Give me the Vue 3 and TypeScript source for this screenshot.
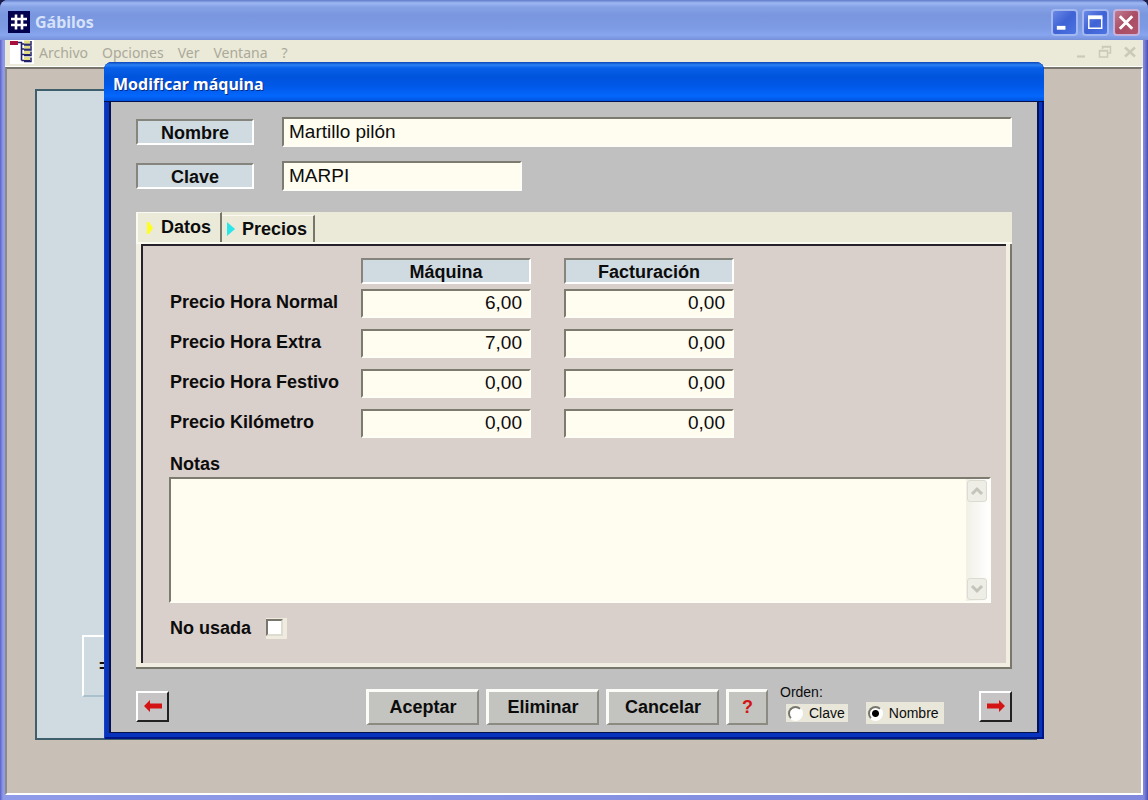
<script setup lang="ts">
import { ref } from 'vue'

interface PriceRow {
  id: string
  label: string
  machine: string
  billing: string
}

const menus: string[] = ['Archivo', 'Opciones', 'Ver', 'Ventana', '?']
const nombre = ref('Martillo pilón')
const clave = ref('MARPI')
const notas = ref('')
const noUsada = ref(false)
const orden = ref('nombre')
const activeTab = ref('datos')
const prices = ref<PriceRow[]>([
  { id: 'normal', label: 'Precio Hora Normal', machine: '6,00', billing: '0,00' },
  { id: 'extra', label: 'Precio Hora Extra', machine: '7,00', billing: '0,00' },
  { id: 'festivo', label: 'Precio Hora Festivo', machine: '0,00', billing: '0,00' },
  { id: 'km', label: 'Precio Kilómetro', machine: '0,00', billing: '0,00' },
])
</script>

<template>
  <div class="app-window">
    <header class="title-bar">
      <svg class="app-icon" width="22" height="22" viewBox="0 0 22 22" aria-hidden="true">
        <rect width="22" height="22" fill="#02024e" />
        <path d="M8 3.500V18.500M14 3.500V18.500M3 8H19M3 14H19" stroke="#fff" stroke-width="2.600" fill="none" />
      </svg>
      <h1>Gábilos</h1>
      <div class="caption-buttons">
        <button type="button" aria-label="Minimizar">
          <svg width="24" height="24" viewBox="0 0 24 24"><rect x="4" y="15" width="9" height="4" fill="#fff" /></svg>
        </button>
        <button type="button" aria-label="Maximizar">
          <svg width="24" height="24" viewBox="0 0 24 24">
            <path d="M5 6V17.500H18.500V6" fill="none" stroke="#fff" stroke-width="1.500" />
            <rect x="4.200" y="4" width="15" height="4" fill="#fff" />
          </svg>
        </button>
        <button type="button" class="close" aria-label="Cerrar">
          <svg width="24" height="24" viewBox="0 0 24 24"><path d="M5 5L18 18M18 5L5 18" stroke="#fff" stroke-width="3" /></svg>
        </button>
      </div>
    </header>

    <nav class="menu-bar">
      <svg class="tree-icon" width="24" height="24" viewBox="0 0 24 24" aria-hidden="true">
        <rect width="24" height="24" fill="#fff" />
        <rect x="0" y="1" width="8" height="4" fill="#a8103c" />
        <path d="M8 2.500H12M11.500 2V20.500M11.500 4H20M11.500 9H20M11.500 14.500H20M11.500 20.500H20" stroke="#20206a" stroke-width="1.600" fill="none" />
        <path d="M14 2H20M14 7H20M14 12.500H20M14 18.500H20" stroke="#e2dd83" stroke-width="3" />
        <path d="M21 1V5H14M21 6V10H14M21 11.500V15.500H14M21 17.500V21.500H14" stroke="#20206a" stroke-width="1.500" fill="none" />
      </svg>
      <a v-for="item in menus" :key="item" href="#">{{ item }}</a>
      <div class="mdi-buttons">
        <svg width="12" height="14" viewBox="0 0 12 14"><path d="M2 11.500H10" stroke="#cbc9b8" stroke-width="2.200" /></svg>
        <svg width="14" height="14" viewBox="0 0 14 14">
          <path d="M4.500 4V1.500H12.500V8H10M4 2H13M1.500 5.500H9.500V12H1.500ZM1 6H10" stroke="#cbc9b8" stroke-width="1.500" fill="none" />
        </svg>
        <svg width="14" height="14" viewBox="0 0 14 14"><path d="M2 2.500L12 11.500M12 2.500L2 11.500" stroke="#cbc9b8" stroke-width="2.500" /></svg>
      </div>
    </nav>

    <main class="workspace">
      <section class="child-window">
        <button type="button" class="child-button">=</button>
      </section>
    </main>

    <form class="dialog" role="dialog" aria-labelledby="dialog-title" @submit.prevent>
      <h2 id="dialog-title">Modificar máquina</h2>
      <div class="dialog-body">
        <div class="field-row">
          <label class="plate" for="nombre">Nombre</label>
          <input id="nombre" v-model="nombre" class="sunken wide" type="text" />
        </div>
        <div class="field-row">
          <label class="plate" for="clave">Clave</label>
          <input id="clave" v-model="clave" class="sunken short" type="text" />
        </div>

        <div class="tabs" role="tablist">
          <button type="button" role="tab" class="tab tab-first" :aria-selected="activeTab === 'datos'" @click="activeTab = 'datos'">
            <svg width="8" height="14" viewBox="0 0 8 14" aria-hidden="true"><path d="M1 1H3L7 7L3 13H1Z" fill="#ffff1e" /></svg>
            Datos
          </button>
          <button type="button" role="tab" class="tab tab-second" :aria-selected="activeTab === 'precios'" @click="activeTab = 'precios'">
            <svg width="8" height="14" viewBox="0 0 8 14" aria-hidden="true"><path d="M0 0L8 7L0 14Z" fill="#28e6ea" /></svg>
            Precios
          </button>
        </div>

        <div class="panel-frame">
          <div class="panel" role="tabpanel">
            <table class="prices">
              <thead>
                <tr>
                  <td></td>
                  <th scope="col"><div class="plate">Máquina</div></th>
                  <th scope="col"><div class="plate">Facturación</div></th>
                </tr>
              </thead>
              <tbody>
                <tr v-for="row in prices" :key="row.id">
                  <th scope="row"><label :for="row.id">{{ row.label }}</label></th>
                  <td><input :id="row.id" v-model="row.machine" class="sunken amount" type="text" /></td>
                  <td><input v-model="row.billing" class="sunken amount" type="text" :aria-label="row.label + ', Facturación'" /></td>
                </tr>
              </tbody>
            </table>

            <label class="notes-label" for="notas">Notas</label>
            <div class="notes sunken">
              <textarea id="notas" v-model="notas"></textarea>
              <div class="scrollbar">
                <button type="button" aria-label="Subir">
                  <svg width="14" height="10" viewBox="0 0 14 10"><path d="M2 8L7 3L12 8" fill="none" stroke="#c4c4ba" stroke-width="3" /></svg>
                </button>
                <button type="button" aria-label="Bajar">
                  <svg width="14" height="10" viewBox="0 0 14 10"><path d="M2 2L7 7L12 2" fill="none" stroke="#c4c4ba" stroke-width="3" /></svg>
                </button>
              </div>
            </div>

            <div class="unused">
              <label for="no-usada">No usada</label>
              <span class="check-plate"><input id="no-usada" v-model="noUsada" type="checkbox" /></span>
            </div>
          </div>
        </div>

        <footer class="actions">
          <button type="button" class="arrow" aria-label="Anterior">
            <svg width="20" height="12" viewBox="0 0 20 12"><path d="M1 6L7 0V3.500H19V8.500H7V12Z" fill="#d41414" /></svg>
          </button>
          <div class="buttons">
            <button type="button" class="push">Aceptar</button>
            <button type="button" class="push">Eliminar</button>
            <button type="button" class="push">Cancelar</button>
            <button type="button" class="push help">?</button>
          </div>
          <div class="right-side">
            <fieldset>
              <legend>Orden:</legend>
              <div class="radios">
                <label><input v-model="orden" type="radio" name="orden" value="clave" />Clave</label>
                <label class="tall"><input v-model="orden" type="radio" name="orden" value="nombre" />Nombre</label>
              </div>
            </fieldset>
            <button type="button" class="arrow" aria-label="Siguiente">
              <svg width="20" height="12" viewBox="0 0 20 12"><path d="M19 6L13 0V3.500H1V8.500H13V12Z" fill="#d41414" /></svg>
            </button>
          </div>
        </footer>
      </div>
    </form>
  </div>
</template>

<style>
body {
  margin: 0;
  background: #1a1d4a;
}
</style>

<style scoped>
* {
  box-sizing: border-box;
}

button,
input,
textarea {
  font: inherit;
  color: inherit;
  margin: 0;
}

.app-window {
  position: relative;
  display: flex;
  flex-direction: column;
  min-height: 100vh;
  padding: 0 5px 5px;
  border-radius: 8px 8px 0 0;
  background: linear-gradient(90deg, #5b61c8 0, #8f9be8 3px, #7f88dc calc(100% - 4px), #4a4fb4 100%);
  font-family: "Liberation Sans", Arial, sans-serif;
  font-size: 18px;
  color: #0c0c0c;
}

.title-bar {
  display: flex;
  align-items: center;
  gap: 5px;
  height: 40px;
  margin: 0 -5px;
  padding: 4px 8px 0;
  border-radius: 8px 8px 0 0;
  background: linear-gradient(180deg, #6079c8 0, #9db8f2 3px, #86a2e6 7px, #7996de 15px, #7d9be4 28px, #86a5ee 35px, #7890da 40px);
}

.title-bar h1 {
  margin: 0;
  font: bold 16px "Noto Sans", "Open Sans", sans-serif;
  color: #d6e2fa;
}

.caption-buttons {
  display: flex;
  gap: 4px;
  margin-left: auto;
}

.caption-buttons button {
  display: flex;
  width: 27px;
  height: 27px;
  padding: 0;
  border: 2px solid #a3b7f0;
  border-radius: 4px;
  background: linear-gradient(135deg, #6a88e6, #3f62d4 50%, #4c74e2);
}

.caption-buttons .close {
  border-color: #c5b2dc;
  background: linear-gradient(135deg, #c07a90, #a94d64 50%, #b0566c);
}

.menu-bar {
  display: flex;
  align-items: center;
  height: 27px;
  padding: 0 6px 2px 5px;
  border-bottom: 1px solid #fff;
  background: #ebe9d8;
  font: 14px "Noto Sans", "Open Sans", sans-serif;
}

.tree-icon {
  margin-right: 5px;
}

.menu-bar a {
  margin-right: 14px;
  color: #aaa99a;
  text-decoration: none;
}

.mdi-buttons {
  display: flex;
  gap: 11px;
  margin-left: auto;
}

.workspace {
  position: relative;
  flex: 1;
  border: 2px solid #fff;
  border-top-color: #77756c;
  border-left-color: #8c8a84;
  background: #c8bfb6;
}

.child-window {
  position: absolute;
  top: 20px;
  left: 28px;
  right: 104px;
  bottom: 53px;
  border: 2px solid #3f5e6c;
  background: #d0dbe1;
}

.child-button {
  position: absolute;
  left: 45px;
  bottom: 41px;
  width: 120px;
  height: 62px;
  padding: 0 0 0 15px;
  border: 2px solid #fff;
  border-bottom-color: #abc0cd;
  background: #d0dbe1;
  font-weight: bold;
  text-align: left;
}

.dialog {
  position: absolute;
  top: 62px;
  left: 104px;
  right: 104px;
  padding: 0 5px 6px;
  border-radius: 8px 8px 0 0;
  background: #0733bd;
  box-shadow: inset 1px 0 #1440c8, inset -2px -2px #001585;
}

.dialog h2 {
  height: 40px;
  margin: 0 -5px;
  padding: 3px 9px 0;
  border-bottom: 1px solid #04104c;
  border-radius: 8px 8px 0 0;
  background: linear-gradient(180deg, #0a46b8 0, #2a80f4 3px, #0860e8 6px, #0054dc 15px, #0059ea 25px, #0467fc 34px, #0050dc 40px);
  font: bold 16px/38px "Noto Sans", "Open Sans", sans-serif;
  color: #fff;
  text-shadow: 1px 1px #0a2a80;
}

.dialog-body {
  padding: 15px 25px 7px;
  border: 1px solid #06124c;
  border-width: 0 2px 1px;
  background: #c0c0c0;
}

.field-row {
  display: flex;
  align-items: center;
  gap: 28px;
  height: 30px;
  margin-bottom: 14px;
}

.plate {
  width: 118px;
  height: 26px;
  border: 2px solid #fff;
  border-top-color: #85857d;
  border-left-color: #85857d;
  background: #d0dbe1;
  font-weight: bold;
  line-height: 24px;
  text-align: center;
}

.sunken {
  height: 30px;
  border: 2px solid #fffef6;
  border-top-color: #7d7a70;
  border-left-color: #7d7a70;
  border-radius: 0;
  background: #fffcf0;
  outline: 0;
}

input.sunken {
  padding: 0 5px;
  font-size: 19px;
}

.wide {
  flex: 1;
  min-width: 0;
}

.short {
  width: 240px;
}

.tabs {
  display: flex;
  align-items: flex-end;
  height: 32px;
  margin-top: 21px;
  border-bottom: 2px solid #fbfaf0;
  border-left: 2px solid #fbfaf0;
  background: #ebe9d8;
}

.tab {
  display: flex;
  align-items: center;
  gap: 7px;
  border: 0;
  border-top: 1px solid #fbfaf2;
  border-right: 2px solid #77766a;
  background: #ebe9d8;
  font-weight: bold;
}

.tab-first {
  width: 84px;
  height: 30px;
  padding: 0 0 0 8px;
}

.tab-second {
  width: 93px;
  height: 27px;
  padding: 0 0 0 5px;
}

.panel-frame {
  padding: 0 4px 4px 5px;
  border: 1px solid #79776b;
  border-width: 0 2px 2px 0;
  background: #f2efe2;
}

.panel {
  padding: 12px 15px 24px 26px;
  border: 2px solid #262229;
  border-width: 2px 0 0 2px;
  background: #d9cfcb;
}

.prices {
  border-collapse: collapse;
}

.prices th,
.prices td {
  height: 40px;
  padding: 0;
  text-align: left;
  vertical-align: top;
}

.prices thead th,
.prices thead td {
  height: 31px;
}

.prices th[scope="row"] {
  padding-left: 1px;
  line-height: 26px;
}

.prices th:first-child,
.prices td:first-child {
  width: 192px;
}

.prices th + th,
.prices td + td,
.prices td + th {
  width: 203px;
}

.prices .plate,
.amount {
  display: block;
  width: 170px;
}

input.amount {
  height: 29px;
  padding: 0 7px 1px;
  text-align: right;
}

.notes-label {
  display: block;
  height: 28px;
  margin-left: 1px;
  font-weight: bold;
  line-height: 30px;
}

.notes {
  display: flex;
  height: 126px;
}

.notes textarea {
  flex: 1;
  min-width: 0;
  padding: 2px 5px;
  border: 0;
  background: transparent;
  outline: 0;
  resize: none;
}

.scrollbar {
  display: flex;
  flex-direction: column;
  justify-content: space-between;
  width: 23px;
  padding: 1px;
  background: linear-gradient(90deg, #f1f0e6, #fff);
}

.scrollbar button {
  display: flex;
  align-items: center;
  justify-content: center;
  width: 20px;
  height: 22px;
  padding: 0;
  border: 1px solid #dcdbd0;
  border-radius: 3px;
  background: #eeeee6;
}

.unused {
  display: flex;
  align-items: center;
  gap: 15px;
  margin: 15px 0 0 1px;
  font-weight: bold;
}

.check-plate {
  display: flex;
  width: 21px;
  height: 21px;
  background: #efebdf;
}

.check-plate input {
  width: 17px;
  height: 17px;
  margin-top: 1px;
  border: 2px solid #dedbd0;
  border-top-color: #77756c;
  border-left-color: #77756c;
  background: #fff;
  appearance: none;
}

.check-plate input:checked {
  background: #333;
}

.actions {
  display: grid;
  grid-template-columns: 230px auto 1fr;
  align-items: center;
  height: 40px;
  margin-top: 16px;
}

.arrow {
  display: flex;
  align-items: center;
  justify-content: center;
  width: 33px;
  height: 31px;
  padding: 0 0 1px;
  border: 2px solid #fff;
  border-right-color: #222;
  border-bottom-color: #222;
  background: #c6c4c4;
}

.buttons {
  display: flex;
  gap: 7px;
}

.push {
  width: 113px;
  height: 36px;
  padding: 0;
  border: 3px solid #fbfbf8;
  border-right-color: #8c8b82;
  border-bottom-color: #8c8b82;
  border-width: 3px 2px 2px 3px;
  background: #c3c3bf;
  font-weight: bold;
}

.help {
  width: 42px;
  color: #d41414;
}

.right-side {
  display: flex;
  align-items: center;
  justify-content: space-between;
  padding-left: 12px;
}

fieldset {
  margin: 0;
  padding: 0 0 4px;
  border: 0;
  font-size: 14px;
}

legend {
  height: 17px;
  padding: 0;
  line-height: 14px;
}

.radios {
  display: flex;
  align-items: center;
  gap: 18px;
  padding-left: 6px;
}

.radios label {
  display: flex;
  align-items: center;
  gap: 6px;
  height: 18px;
  padding: 0 3px 0 2px;
  background: #e9e7d9;
}

.radios .tall {
  height: 22px;
  padding-right: 5px;
}

.radios input {
  width: 15px;
  height: 15px;
  border: 2px solid #fff;
  border-top-color: #77756c;
  border-left-color: #77756c;
  border-radius: 50%;
  background: #fff;
  appearance: none;
}

.radios input:checked {
  background: radial-gradient(circle, #000 3px, #fff 4px);
}
</style>
